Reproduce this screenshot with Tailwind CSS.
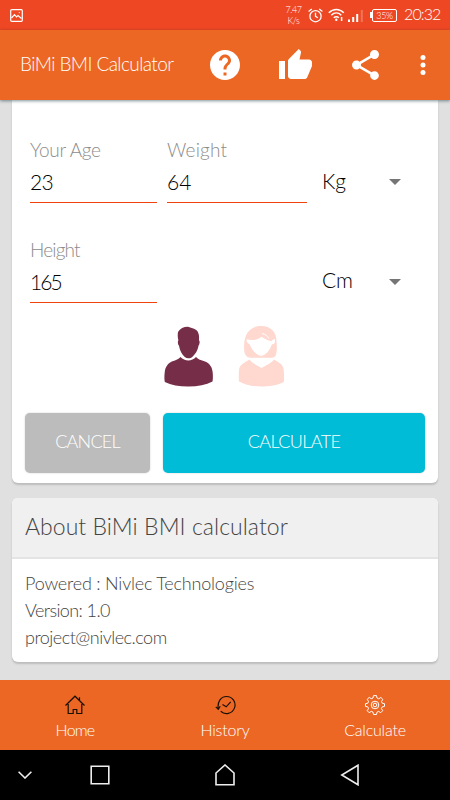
<!DOCTYPE html>
<html lang="en">
<head>
  <meta charset="UTF-8">
  <meta name="viewport" content="width=device-width, initial-scale=1.0">
  <title>BiMi BMI Calculator</title>
  <script src="https://cdn.jsdelivr.net/npm/@tailwindcss/browser@4"></script>
</head>
<body class="w-[450px] h-[800px] overflow-hidden flex flex-col bg-[#e0e0e0] font-['Lato',sans-serif] font-light whitespace-nowrap">

  <!-- Status bar -->
  <div class="h-[30px] shrink-0 bg-[#ee4723] text-white flex items-center pl-[10px] pr-[10px]">
    <svg class="w-[13px] h-[13px]" viewBox="0 0 13 13" fill="none" stroke="#fff" stroke-width="1.2">
      <rect x=".7" y=".7" width="11.6" height="11.6" rx="1"/>
      <path d="M1.5 9l3-3.3 2 2.2 1.5-1.4 3.5 3"/>
      <circle cx="9.3" cy="3.6" r=".6" fill="#fff" stroke="none"/>
    </svg>
    <div class="ml-auto w-[17px] text-[9px] text-center tracking-[-0.4px]">
      <div class="h-[11px] leading-[11px]">7.47</div>
      <div class="h-[11px] leading-[11px]">K/s</div>
    </div>
    <svg class="ml-[6px] w-[15px] h-[15px]" viewBox="0 0 15 15" fill="none" stroke="#fff" stroke-width="1.3">
      <circle cx="7.5" cy="8.2" r="5.6"/>
      <path d="M7.5 4.8v3.6l2.4 1.4M.6 3.6L3.8.9M14.4 3.6L11.2.9"/>
    </svg>
    <svg class="ml-[5px] w-[17px] h-[14px]" viewBox="0 0 17 14" fill="none" stroke="#fff" stroke-width="1.5">
      <path d="M.8 4.8c4.4-4.4 10.6-4.4 15 0M3.3 7.3c3-3 7-3 10 0M5.8 9.8c1.5-1.5 3.5-1.5 5 0"/>
      <circle cx="8.3" cy="11.8" r="1.2" fill="#fff" stroke="none"/>
      <path d="M13.6 9v4"/>
    </svg>
    <svg class="ml-[3px] w-[16px] h-[13px]" viewBox="0 0 16 13" fill="#fff">
      <path d="M0 10.5h2V13H0zM4.2 8h2v5h-2zM8.2 5h2v8h-2z"/>
      <path d="M12.8 1h2v12h-2z" opacity=".25"/>
    </svg>
    <div class="ml-[6px] w-[2px] h-[6px] bg-white"></div>
    <div class="w-[25px] h-[13px] border border-white rounded-[2px] text-[9px] leading-[11px] text-center tracking-[-0.4px]">35%</div>
    <div class="ml-[7px] w-[36px] text-[16px] leading-[20px] tracking-[-0.9px] -mt-[2px]">20:32</div>
  </div>

  <!-- App bar -->
  <header class="h-[70px] shrink-0 bg-[#ec6723] text-white flex items-center pl-5 relative z-10 shadow-[0_1px_3px_rgba(0,40,50,0.5)]">
    <h1 class="w-[190px] text-[19px] leading-6 tracking-[-0.58px] -mt-[3px]">BiMi BMI Calculator</h1>
    <svg class="w-[30px] h-[30px]" viewBox="2 2 20 20" fill="#fff">
      <path d="M12 2C6.48 2 2 6.48 2 12s4.48 10 10 10 10-4.48 10-10S17.52 2 12 2zm1 17h-2v-2h2v2zm2.07-7.75l-.9.92C13.45 12.9 13 13.5 13 15h-2v-.5c0-1.1.45-2.1 1.17-2.83l1.24-1.26c.37-.36.59-.86.59-1.41 0-1.1-.9-2-2-2s-2 .9-2 2H8c0-2.21 1.79-4 4-4s4 1.79 4 4c0 .88-.36 1.68-.93 2.25z"/>
    </svg>
    <svg class="ml-[39px] w-[33px] h-[30px] -mt-[2px]" viewBox="1 1 22 20" fill="#fff" preserveAspectRatio="none">
      <path d="M1 21h4V9H1v12zm22-11c0-1.1-.9-2-2-2h-6.31l.95-4.57.03-.32c0-.41-.17-.79-.44-1.06L14.17 1 7.59 7.59C7.22 7.95 7 8.45 7 9v10c0 1.1.9 2 2 2h9c.83 0 1.54-.5 1.84-1.22l3.02-7.05c.09-.23.14-.47.14-.73v-2z"/>
    </svg>
    <svg class="ml-[40px] w-[27px] h-[30px]" viewBox="3 2 18 19.92" fill="#fff" preserveAspectRatio="none">
      <path d="M18 16.08c-.76 0-1.44.3-1.96.77L8.91 12.7c.05-.23.09-.46.09-.7s-.04-.47-.09-.7l7.05-4.11c.54.5 1.25.81 2.04.81 1.66 0 3-1.34 3-3s-1.34-3-3-3-3 1.34-3 3c0 .24.04.47.09.7L8.04 9.81C7.5 9.31 6.79 9 6 9c-1.66 0-3 1.34-3 3s1.34 3 3 3c.79 0 1.5-.31 2.04-.81l7.12 4.16c-.05.21-.08.43-.08.65 0 1.61 1.31 2.92 2.92 2.92s2.92-1.31 2.92-2.92-1.31-2.92-2.92-2.92z"/>
    </svg>
    <svg class="ml-[41px] w-[6px] h-[20px]" viewBox="0 0 6 20" fill="#fff">
      <circle cx="3" cy="2.5" r="2.5"/><circle cx="3" cy="10" r="2.5"/><circle cx="3" cy="17.5" r="2.5"/>
    </svg>
  </header>

  <main class="h-[580px] shrink-0 px-3">
    <!-- Form card -->
    <section class="h-[383px] bg-white rounded-b-[6px] shadow-[0_2px_2px_rgba(0,0,0,0.16)] px-[13px] pt-[38px] w-[426px]">
      <div class="flex pl-[5px] h-[100px]">
        <div class="w-[127px]">
          <div class="h-6 text-[19px] leading-6 tracking-[-0.3px] text-[#8c8c8c]">Your Age</div>
          <div class="h-[41px] pt-2 text-[21px] leading-6 text-black border-b border-[#f0440e] tracking-[-0.6px]">23</div>
        </div>
        <div class="ml-[10px] w-[140px]">
          <div class="h-6 text-[19px] leading-6 tracking-[0.2px] text-[#8c8c8c]">Weight</div>
          <div class="h-[41px] pt-2 text-[21px] leading-6 text-black border-b border-[#f0440e]">64</div>
        </div>
        <div class="ml-[15px] w-[79px] h-6 mt-[31px] flex items-center justify-between">
          <span class="text-[21px] leading-6 text-black">Kg</span>
          <svg class="w-3 h-[6px] mt-[2px]" viewBox="0 0 12 6" fill="#757575"><path d="M0 0h12L6 6z"/></svg>
        </div>
      </div>
      <div class="flex pl-[5px] h-[88px]">
        <div class="w-[127px]">
          <div class="h-6 text-[19px] leading-6 tracking-[-0.85px] text-[#8c8c8c]">Height</div>
          <div class="h-[41px] pt-2 text-[21px] leading-6 text-black border-b border-[#f0440e] tracking-[-1.9px]">165</div>
        </div>
        <div class="ml-[165px] w-[79px] h-6 mt-[31px] flex items-center justify-between">
          <span class="text-[21px] leading-6 text-black -mt-[2px]">Cm</span>
          <svg class="w-3 h-[6px] mt-[2px]" viewBox="0 0 12 6" fill="#757575"><path d="M0 0h12L6 6z"/></svg>
        </div>
      </div>

      <!-- Gender -->
      <div class="flex h-[61px] pl-[139px] gap-[25px]">
        <svg class="w-[49px] h-[61px]" viewBox="0 0 49 61" fill="#752d48">
          <path d="M14 6C16 2.500 20 .7 24 .8c2 .8 4 1.200 6 2 4 1.500 5.600 5 5 11.500 1.200 1 .6 4-.5 5.500-1 5.500-3.500 8.500-6 11-2.500 2-5.500 2-8 0-2.500-2.500-4.700-6-5.500-11-1.300-1.500-1.500-4.500-.6-5.500-.8-3-.8-6-.4-8.300z"/>
          <path d="M16.500 31c4 4.500 11.500 4.500 15.500 0 2 2.500 5 3 9 4.500 5 2 7.300 6 7.700 11 .3 4 .3 6.500-.2 9C42 59 34 60.500 24.500 60.500S7 59 .8 56C.3 53 .3 50 .7 46.500 1.200 41 4 37 8.500 35.300c3.500-1.300 6-2 8-4.300z"/>
        </svg>
        <svg class="w-[47px] h-[61px]" viewBox="0 0 47 61" fill="#ffd8d0">
          <path d="M23 0C12 0 6.500 8 6.200 18 6 23 5.800 27 8 29.500c1 1.800 2.500 2.200 5 2.200h20c4 0 5-2 5.300-4.500.8-4 .6-8 .2-12C38.500 6 33 0 23 0z"/>
          <path fill="#fff" d="M8.800 13.300c4.500 1.500 10 1 14.700-2.600 3.500 2.300 6 3.300 10 4.600 1-1.500 1.800-2 3-2.300 1 .8.600 3.800-.5 4.800l-2.200.7C32 24.500 27 29.800 23 29.800S14 24.500 11.500 18c-2.500-.8-3.400-3.200-2.700-4.700z"/>
          <path d="M24 7.500c3.500.8 5.500 2.700 7 5" fill="none" stroke="#fff" stroke-width="1"/>
          <path d="M11.500 33.500c3.500 4.500 7 5.300 12 8.500 5-3.200 9-4 12.500-8.500 5.500 3.500 9.500 5 9.800 11 .2 4 .4 7 0 11.500C39 59.500 31 60.500 23 60.500S7 59 1 55.500C.6 51.500.8 48 1 44c.5-5.500 5-7 10.500-10.500z"/>
        </svg>
      </div>

      <div class="flex gap-[13px] mt-[26px]">
        <button class="w-[125px] h-[60px] pb-[3px] rounded-[5px] bg-[#bcbcbc] text-white text-[18px] tracking-[-0.8px] shadow-[0_0_2px_rgba(0,0,0,0.2)]">CANCEL</button>
        <button class="w-[262px] h-[60px] pb-[3px] rounded-[5px] bg-[#00bcd7] text-white text-[18px] tracking-[-0.6px] shadow-[0_0_2px_rgba(0,0,0,0.2)]">CALCULATE</button>
      </div>
    </section>

    <!-- About card -->
    <section class="mt-[15px] h-[164px] bg-white rounded-[6px] shadow-[0_2px_2px_rgba(0,0,0,0.16)] overflow-hidden">
      <h2 class="h-[61px] bg-[#f0f0f0] border-b-2 border-[#e4e4e4] pl-[13px] pt-[14px] text-[23px] leading-[28px] text-[#444] tracking-[0.05px]">About BiMi BMI calculator</h2>
      <div class="pl-[13px] pt-[11px] text-[18px] leading-[27px] text-[#444]">
        <p class="tracking-[-0.2px]">Powered : Nivlec Technologies</p>
        <p class="tracking-[-0.6px]">Version: 1.0</p>
        <p class="tracking-[-0.5px]">project@nivlec.com</p>
      </div>
    </section>
  </main>

  <!-- Tabs -->
  <nav class="h-[70px] shrink-0 bg-[#ec6723] grid grid-cols-3 text-white text-[16px] leading-5">
    <div class="flex flex-col items-center pt-[15px]">
      <svg class="w-5 h-5" viewBox="0 0 20 20" fill="none" stroke="#1a1008" stroke-width="1.200">
        <path d="M.5 10.500L10 1.200l9.500 9.300M14.500 5.500V2.300M3.200 9v9.500h5v-4h3.600v4h5V9"/>
      </svg>
      <span class="mt-[5px] tracking-[-0.8px]">Home</span>
    </div>
    <div class="flex flex-col items-center pt-[15px]">
      <svg class="w-[21px] h-5" viewBox="0 0 21 20" fill="none" stroke="#1a1008" stroke-width="1.200">
        <path d="M3.200 14C2.300 7 5.500 1.500 11.500 1.500a8.500 8.500 0 1 1-5.800 14.700M.8 11.800l2.500 2.500 1.900-3M7.500 9.500l3.700 2.300 4.500-5"/>
      </svg>
      <span class="mt-[5px] tracking-[-0.2px]">History</span>
    </div>
    <div class="flex flex-col items-center pt-[15px]">
      <svg class="w-5 h-5" viewBox="0 0 20 20" fill="none" stroke="#fff" stroke-width="1" stroke-linejoin="round">
        <path d="M8.500.6h3l.5 2.400 1.700.8 2.200-1.300 1.900 1.900-1.300 2.200.7 1.600 2.300.5v2.700l-2.300.5-.8 1.700 1.300 2.100-2 2-2.100-1.300-1.600.7-.5 2.400h-3L8 17.100l-1.700-.7-2.200 1.300-1.900-2 1.300-2.100-.7-1.700-2.300-.5V8.700l2.300-.5.7-1.700-1.300-2.200 2-1.900 2.100 1.300L8 3z"/>
        <circle cx="10" cy="10" r="3.800"/><circle cx="10" cy="10" r="1.800"/>
      </svg>
      <span class="mt-[5px] tracking-[-0.2px]">Calculate</span>
    </div>
  </nav>

  <!-- System navigation -->
  <div class="h-[50px] shrink-0 bg-black flex items-center pl-[18px]">
    <svg class="w-[14px] h-[8px]" viewBox="0 0 14 8" fill="none" stroke="#eee" stroke-width="1.600"><path d="M.6.8L7 7l6.400-6.200"/></svg>
    <svg class="ml-[58px] w-[20px] h-[20px]" viewBox="0 0 20 20" fill="none" stroke="#eee" stroke-width="1.600"><path d="M1.200 1.200h17.600v17.600H1.200z"/></svg>
    <svg class="ml-[105px] w-[20px] h-[22px]" viewBox="0 0 20 22" fill="none" stroke="#eee" stroke-width="1.600"><path d="M1 20.800V9l9-8 9 8v11.800z"/></svg>
    <svg class="ml-[105px] w-[20px] h-[22px]" viewBox="0 0 20 22" fill="none" stroke="#eee" stroke-width="1.600"><path d="M18 1.200v19.600L1.800 11z"/></svg>
  </div>
</body>
</html>
